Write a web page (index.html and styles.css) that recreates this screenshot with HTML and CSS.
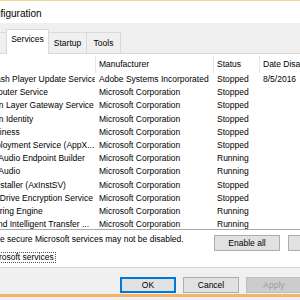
FILE: index.html
```html
<!DOCTYPE html>
<html lang="en">
<head>
  <meta charset="UTF-8" />
  <title>System Configuration</title>
  <link rel="stylesheet" href="styles.css">
</head>
<body>

  <div class="ventana">
    <div class="titulo"><span class="titulo-texto">System Configuration</span></div>

    <div class="dialogo">
      <div class="tabs">
        <div class="tab tab-boot">Boot</div>
        <div class="tab activa">Services</div>
        <div class="tab tab-startup">Startup</div>
        <div class="tab tab-tools">Tools</div>
      </div>

      <div class="pagina">
        <div class="lista">
          <div class="fila cabecera">
            <div class="celda">Service</div>
            <div class="celda">Manufacturer</div>
            <div class="celda">Status</div>
            <div class="celda">Date Disabled</div>
          </div>
          <div class="fila"><div class="celda">Adobe Flash Player Update Service</div><div class="celda">Adobe Systems Incorporated</div><div class="celda">Stopped</div><div class="celda">8/5/2016</div></div>
          <div class="fila"><div class="celda">AllJoyn Router Service</div><div class="celda">Microsoft Corporation</div><div class="celda">Stopped</div><div class="celda"></div></div>
          <div class="fila"><div class="celda">Application Layer Gateway Service</div><div class="celda">Microsoft Corporation</div><div class="celda">Stopped</div><div class="celda"></div></div>
          <div class="fila"><div class="celda">Application Identity</div><div class="celda">Microsoft Corporation</div><div class="celda">Stopped</div><div class="celda"></div></div>
          <div class="fila"><div class="celda">App Readiness</div><div class="celda">Microsoft Corporation</div><div class="celda">Stopped</div><div class="celda"></div></div>
          <div class="fila"><div class="celda">AppX Deployment Service (AppX...</div><div class="celda">Microsoft Corporation</div><div class="celda">Stopped</div><div class="celda"></div></div>
          <div class="fila"><div class="celda">Windows Audio Endpoint Builder</div><div class="celda">Microsoft Corporation</div><div class="celda">Running</div><div class="celda"></div></div>
          <div class="fila"><div class="celda">Windows Audio</div><div class="celda">Microsoft Corporation</div><div class="celda">Running</div><div class="celda"></div></div>
          <div class="fila"><div class="celda">ActiveX Installer (AxInstSV)</div><div class="celda">Microsoft Corporation</div><div class="celda">Stopped</div><div class="celda"></div></div>
          <div class="fila"><div class="celda">BitLocker Drive Encryption Service</div><div class="celda">Microsoft Corporation</div><div class="celda">Stopped</div><div class="celda"></div></div>
          <div class="fila"><div class="celda">Base Filtering Engine</div><div class="celda">Microsoft Corporation</div><div class="celda">Running</div><div class="celda"></div></div>
          <div class="fila"><div class="celda">Background Intelligent Transfer ...</div><div class="celda">Microsoft Corporation</div><div class="celda">Running</div><div class="celda"></div></div>
        </div>

        <div class="nota-fila">
          <span class="nota">Note that some secure Microsoft services may not be disabled.</span>
          <div class="botones">
            <button class="boton ancho">Enable all</button>
            <button class="boton ancho">Disable all</button>
          </div>
        </div>

        <label class="ocultar">
          <span class="casilla"></span>
          <span class="foco">Hide all Microsoft services</span>
        </label>
      </div>

      <div class="pie">
        <button class="boton defecto">OK</button>
        <button class="boton">Cancel</button>
        <button class="boton" disabled>Apply</button>
      </div>
    </div>
  </div>

</body>
</html>
```

FILE: styles.css
```css
body {
  margin: 0;
  width: 300px;
  height: 300px;
  overflow: hidden;
  font-family: 'Liberation Sans', Arial, sans-serif;
  font-size: 8.5px;
  color: #000;
  background-color: #f0f0f0;
}

.ventana {
  border-top: 1px solid #f1d98f;
}

.titulo {
  height: 19px;
  padding-top: 3px;
  line-height: 19px;
  background-color: #fff;
  font-size: 10px;
  white-space: nowrap;
}

.titulo-texto {
  margin-left: -54px;
}

/* Tabs */
.tabs {
  display: flex;
  align-items: flex-end;
  height: 30px;
  margin-left: -29px;
}

.tab {
  height: 20px;
  line-height: 20px;
  text-align: center;
  border: 1px solid #d9d9d9;
  border-bottom: none;
  margin-right: -1px;
  white-space: nowrap;
}

.tab-boot { width: 34px; }
.tab-startup { width: 37px; }
.tab-tools { width: 33px; }

.tab.activa {
  width: 41px;
  height: 24px;
  line-height: 19px;
  background-color: #fff;
  margin-bottom: -1px;
  position: relative;
  z-index: 1;
}

/* Tab page */
.pagina {
  background-color: #fff;
  border-top: 1px solid #d9d9d9;
  border-bottom: 1px solid #d9d9d9;
  padding-top: 2px;
  padding-bottom: 4px;
}

.lista {
  margin-left: -44px;
  width: 420px;
  height: 173px;
  overflow: hidden;
  border-bottom: 1px solid #a9a9a9;
}

.fila {
  display: grid;
  grid-template-columns: 139px 118px 46px 117px;
  height: 13.2px;
  line-height: 13.2px;
  white-space: nowrap;
}

.fila .celda {
  padding-left: 4px;
  overflow: hidden;
}

.fila .celda:first-child {
  padding-left: 6px;
}

.cabecera {
  height: 17px;
  line-height: 16px;
}

.cabecera .celda + .celda {
  border-left: 1px solid #e5e5e5;
  padding-left: 3px;
}

.nota-fila {
  display: flex;
  align-items: flex-start;
  margin-top: 4px;
  margin-left: -53px;
}

.nota {
  width: 267px;
  flex-shrink: 0;
  line-height: 10px;
  white-space: nowrap;
}

.botones {
  display: flex;
  gap: 8px;
  margin-top: 1px;
}

.ocultar {
  display: flex;
  align-items: center;
  gap: 4px;
  margin-top: 1px;
  margin-left: -62px;
}

.casilla {
  width: 9px;
  height: 9px;
  border: 1px solid #333;
  background-color: #fff;
}

.foco {
  border: 1px dotted #555;
  padding: 0 1px;
  line-height: 9px;
  white-space: nowrap;
}

/* Buttons */
.boton {
  font-family: inherit;
  font-size: 8.5px;
  color: #000;
  width: 56px;
  height: 16px;
  padding: 0;
  background-color: #e1e1e1;
  border: 1px solid #adadad;
  flex-shrink: 0;
}

.boton.ancho {
  width: 66px;
}

.boton.defecto {
  border-color: #0078d7;
  box-shadow: inset 0 0 0 1px #0078d7;
}

.boton:disabled {
  color: #9c9c9c;
  background-color: #cccccc;
  border-color: #bfbfbf;
}

.pie {
  display: flex;
  gap: 7px;
  height: 29px;
  padding-left: 120px;
  padding-top: 9px;
  box-sizing: border-box;
  border-bottom: 3px solid #f5b468;
}
```
